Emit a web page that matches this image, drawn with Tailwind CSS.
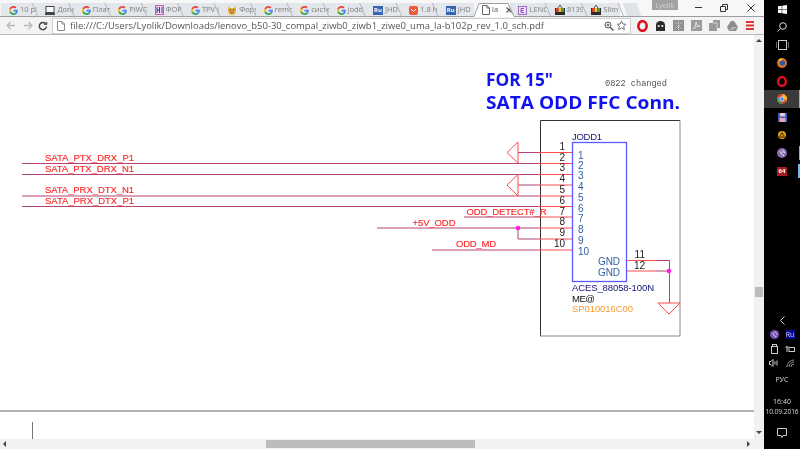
<!DOCTYPE html>
<html lang="en">
<head>
  <meta charset="UTF-8" />
  <title>la-b102p_rev_1.0_sch.pdf</title>
  <script src="https://cdn.jsdelivr.net/npm/@tailwindcss/browser@4"></script>
</head>
<body class="bg-black">
  <svg class="hidden">
    <symbol id="g" viewBox="0 0 48 48">
      <path fill="#EA4335" d="M24 9.5c3.54 0 6.71 1.22 9.21 3.6l6.85-6.85C35.9 2.38 30.47 0 24 0 14.62 0 6.51 5.38 2.56 13.22l7.98 6.19C12.43 13.72 17.74 9.5 24 9.5z"/>
      <path fill="#4285F4" d="M46.98 24.55c0-1.57-.15-3.09-.38-4.55H24v9.02h12.94c-.58 2.96-2.26 5.48-4.78 7.18l7.73 6c4.51-4.18 7.09-10.36 7.09-17.65z"/>
      <path fill="#FBBC05" d="M10.53 28.59c-.48-1.45-.76-2.99-.76-4.59s.27-3.14.76-4.59l-7.98-6.19C.92 16.46 0 20.12 0 24c0 3.88.92 7.54 2.56 10.78l7.97-6.19z"/>
      <path fill="#34A853" d="M24 48c6.48 0 11.93-2.13 15.89-5.81l-7.73-6c-2.15 1.45-4.92 2.3-8.16 2.3-6.26 0-11.57-4.22-13.47-9.91l-7.98 6.19C6.51 42.62 14.62 48 24 48z"/>
    </symbol>
    <symbol id="tv" viewBox="0 0 10 10">
      <rect y="3" width="10" height="7" fill="#2b2b2b"/>
      <rect x="1" y="3" width="2.6" height="4" fill="#e53935"/>
      <rect x="3.6" y="3" width="2.6" height="4" fill="#fbc02d"/>
      <rect x="6.2" y="3" width="2.8" height="4" fill="#43a047"/>
      <path d="M3 3l2-3 2 3" fill="none" stroke="#555"/>
    </symbol>
  </svg>

  <div class="flex w-[800px] h-[449px] overflow-hidden font-['Open_Sans',sans-serif]">
    <!-- browser window -->
    <div class="flex flex-col w-[764px] bg-white">
      <!-- tab strip -->
      <div class="relative flex h-[17px] pt-[3px] pl-px bg-[#f7f7f7] text-[7.5px] leading-none text-[#7d7d7d] whitespace-nowrap blur-[0.3px]">
        <div class="flex items-center gap-[2px] w-[36.4px] pl-2 overflow-hidden bg-[#e3e6ea]"><svg class="w-[9px] h-[9px] shrink-0"><use href="#g"/></svg><span>10 pi</span></div>
        <div class="flex items-center gap-[2px] w-[36.4px] pl-2 overflow-hidden bg-[#e3e6ea]">
          <svg class="w-[10px] h-[9px] shrink-0" viewBox="0 0 10 9"><rect x="1" y="0.5" width="8" height="6" fill="#fff" stroke="#444"/><rect y="7" width="10" height="2" fill="#444"/></svg><span>Допс</span>
        </div>
        <div class="flex items-center gap-[2px] w-[36.4px] pl-2 overflow-hidden bg-[#e3e6ea]"><svg class="w-[9px] h-[9px] shrink-0"><use href="#g"/></svg><span>Плат</span></div>
        <div class="flex items-center gap-[2px] w-[36.4px] pl-2 overflow-hidden bg-[#e3e6ea]"><svg class="w-[9px] h-[9px] shrink-0"><use href="#g"/></svg><span>PIWG</span></div>
        <div class="flex items-center gap-[2px] w-[36.4px] pl-2 overflow-hidden bg-[#e3e6ea]">
          <svg class="w-[9px] h-[10px] shrink-0" viewBox="0 0 9 10"><rect x="0.5" y="0.5" width="8" height="9" fill="#f4d6ec" stroke="#d05ab0"/><path d="M2 2v6M4.500 2v6M7 2v6M2 5h2.500" stroke="#2f3fb0" fill="none"/></svg><span>ФОР</span>
        </div>
        <div class="flex items-center gap-[2px] w-[36.4px] pl-2 overflow-hidden bg-[#e3e6ea]"><svg class="w-[9px] h-[9px] shrink-0"><use href="#g"/></svg><span>TPV C</span></div>
        <div class="flex items-center gap-[2px] w-[36.4px] pl-2 overflow-hidden bg-[#e3e6ea]">
          <svg class="w-[10px] h-[9px] shrink-0" viewBox="0 0 10 9"><path d="M1 0l2 2h4l2-2v6l-2 3H3L1 6z" fill="#e3b23c"/><circle cx="3.500" cy="4" r="0.800" fill="#333"/><circle cx="6.500" cy="4" r="0.800" fill="#333"/><path d="M3.500 6.500h3" stroke="#a33" fill="none"/></svg><span>Фору</span>
        </div>
        <div class="flex items-center gap-[2px] w-[36.4px] pl-2 overflow-hidden bg-[#e3e6ea]"><svg class="w-[9px] h-[9px] shrink-0"><use href="#g"/></svg><span>remo</span></div>
        <div class="flex items-center gap-[2px] w-[36.4px] pl-2 overflow-hidden bg-[#e3e6ea]"><svg class="w-[9px] h-[9px] shrink-0"><use href="#g"/></svg><span>систе</span></div>
        <div class="flex items-center gap-[2px] w-[36.4px] pl-2 overflow-hidden bg-[#e3e6ea]"><svg class="w-[9px] h-[9px] shrink-0"><use href="#g"/></svg><span>jodd</span></div>
        <div class="flex items-center gap-[2px] w-[36.4px] pl-2 overflow-hidden bg-[#e3e6ea]">
          <span class="flex items-center justify-center w-[10px] h-[9px] shrink-0 bg-[#3565b0] text-white text-[6px] font-bold">Ru</span><span>JHD</span>
        </div>
        <div class="flex items-center gap-[2px] w-[36.4px] pl-2 overflow-hidden bg-[#e3e6ea]">
          <svg class="w-[9px] h-[9px] shrink-0" viewBox="0 0 9 9"><rect width="9" height="9" rx="2" fill="#ef5a3c"/><path d="M2 3l2.500 2.500L7 3" stroke="#fff" fill="none"/></svg><span>1.8 h</span>
        </div>
        <div class="flex items-center gap-[2px] w-[36.4px] pl-2 overflow-hidden bg-[#e3e6ea]">
          <span class="flex items-center justify-center w-[10px] h-[9px] shrink-0 bg-[#3565b0] text-white text-[6px] font-bold">Ru</span><span>JHD</span>
        </div>
        <div class="flex items-center gap-[2px] w-[40px] -mr-[3.6px] pl-2 overflow-hidden bg-white text-[#555] [clip-path:polygon(0_100%,5px_0,calc(100%-6px)_0,100%_100%)] z-10">
          <svg class="w-[8px] h-[10px] shrink-0" viewBox="0 0 8 10"><path d="M.5.5h4.500l2.500 2.500v6.500h-7zM5 .5v2.500h2.500" fill="#fff" stroke="#666"/></svg><span>la</span>
          <svg class="w-[6px] h-[6px] ml-[6px] shrink-0" viewBox="0 0 6 6"><path d="M.5.5l5 5M5.500.5l-5 5" stroke="#555" stroke-width="1.100"/></svg>
        </div>
        <div class="flex items-center gap-[2px] w-[36.4px] pl-2 overflow-hidden bg-[#e3e6ea]">
          <svg class="w-[9px] h-[9px] shrink-0" viewBox="0 0 9 9"><rect x="0.500" y="0.500" width="8" height="8" fill="#efe4f7" stroke="#9a6cc4"/><path d="M6 2.500H3v4h3M3 4.500h2.500" stroke="#8a55bb" fill="none"/></svg><span>LENC</span>
        </div>
        <div class="flex items-center gap-[2px] w-[36.4px] pl-2 overflow-hidden bg-[#e3e6ea]"><svg class="w-[10px] h-[10px] shrink-0"><use href="#tv"/></svg><span>8139</span></div>
        <div class="flex items-center gap-[2px] w-[36.4px] pl-2 overflow-hidden bg-[#e3e6ea]"><svg class="w-[10px] h-[10px] shrink-0"><use href="#tv"/></svg><span>Slim</span></div>
        <div class="w-[19px] ml-[3px] bg-[#dfe3e8] [clip-path:polygon(0_0,calc(100%-5px)_0,100%_100%,5px_100%)]"></div>

        <!-- tab separators and the active tab's outline -->
        <svg class="absolute inset-0 w-[764px] h-[17px] z-20 pointer-events-none" viewBox="0 0 764 17" fill="none">
          <path stroke="#b5b8bc" d="M32 3l6 14M68.400 3l6 14M104.800 3l6 14M141.200 3l6 14M177.600 3l6 14M214 3l6 14M250.400 3l6 14M286.800 3l6 14M323.200 3l6 14M359.600 3l6 14M396 3l6 14M432.400 3l6 14M545 3l6 14M581.500 3l6 14M618 3l6 14"/>
          <path stroke="#9a9da1" d="M0 16.500H474L479 3.500H508L514 16.500H764"/>
        </svg>

        <!-- signed-in user badge, sits in the frame -->
        <div class="absolute left-[652px] top-0 flex items-center justify-center w-[26px] h-[10px] bg-[#a2a2a2] text-[7px] text-[#d5d5d5]">Lyolik</div>
        <div class="absolute left-[685px] top-0 flex w-[79px] h-[17px]">
          <div class="flex items-center justify-center w-[26px] h-[15px]"><span class="w-[7px] h-px bg-[#333]"></span></div>
          <div class="flex items-center justify-center w-[26px] h-[15px]">
            <svg class="w-[8px] h-[8px]" viewBox="0 0 8 8" fill="none" stroke="#333"><path d="M.5 2.500h5v5h-5zM2.500 2.500v-2h5v5h-2"/></svg>
          </div>
          <div class="flex items-center justify-center w-[27px] h-[15px]">
            <svg class="w-[8px] h-[8px]" viewBox="0 0 8 8" fill="none" stroke="#333"><path d="M.5.5l7 7M7.500.5l-7 7"/></svg>
          </div>
        </div>
      </div>

      <!-- toolbar -->
      <div class="flex items-center h-[18px] bg-[#f3f3f3] border-b border-[#b8b8b8] blur-[0.3px]">
        <div class="flex items-center w-[52px] h-full pl-[6px] gap-[9px]">
          <svg class="w-[9px] h-[9px] shrink-0" viewBox="0 0 9 9" fill="none" stroke="#b9b9b9" stroke-width="1.300"><path d="M9 4.500H1M4.500 1L1 4.500 4.500 8"/></svg>
          <svg class="w-[9px] h-[9px] shrink-0" viewBox="0 0 9 9" fill="none" stroke="#b9b9b9" stroke-width="1.300"><path d="M0 4.500h8M4.500 1L8 4.500 4.500 8"/></svg>
          <svg class="w-[10px] h-[10px] -ml-[4px] shrink-0" viewBox="0 0 10 10" fill="none" stroke="#444" stroke-width="1.500"><path d="M8.500 5.500a3.600 3.600 0 1 1-1-3"/><path d="M8.800.8v2.700H6.100" fill="#444" stroke-width="0.800"/></svg>
        </div>
        <div class="flex items-center w-[579px] h-[16px] bg-white border border-[#cfcfcf] pl-[4px]">
          <svg class="w-[8px] h-[10px] shrink-0" viewBox="0 0 8 10"><path d="M.5.500h4.500l2.500 2.500v6.500h-7zM5 .5v2.500h2.500" fill="#fff" stroke="#8a8a8a"/></svg>
          <span class="ml-[5px] w-[447px] text-[9.45px] leading-none text-[#555] whitespace-nowrap">file:///C:/Users/Lyolik/Downloads/lenovo_b50-30_compal_ziwb0_ziwb1_ziwe0_uma_la-b102p_rev_1.0_sch.pdf</span>
          <svg class="w-[10px] h-[10px] ml-auto shrink-0" viewBox="0 0 10 10" fill="none" stroke="#555"><circle cx="4" cy="4" r="3"/><path d="M6.500 6.500L9.500 9.500" stroke-width="1.500"/><path d="M2.500 4h3M4 2.500v3"/></svg>
          <svg class="w-[11px] h-[11px] ml-[2px] mr-[3px] shrink-0" viewBox="0 0 11 11" fill="none" stroke="#777"><path d="M5.500 1l1.400 3 3.100.3-2.400 2.100.8 3.200-2.900-1.700-2.900 1.700.8-3.200L1 4.300l3.100-.3z"/></svg>
        </div>
        <div class="flex items-center justify-between w-[129px] h-full pl-[6px] pr-[5px]">
          <svg class="w-[11px] h-[12px]" viewBox="0 0 10 11"><ellipse cx="5" cy="5.500" rx="3.800" ry="4.400" fill="none" stroke="#e0101e" stroke-width="2.400"/></svg>
          <svg class="w-[11px] h-[10px]" viewBox="0 0 11 10"><path d="M1 4a4.500 4 0 0 1 9 0v6H1z" fill="#2a2a2a"/><circle cx="3.700" cy="5" r="1" fill="#fff"/><circle cx="7.300" cy="5" r="1" fill="#fff"/></svg>
          <svg class="w-[11px] h-[11px]" viewBox="0 0 11 11"><rect width="11" height="11" fill="#8e8e8e"/><path d="M2 2l7 7M9 2l-7 7M5.500 1v9" stroke="#e6e6e6" stroke-dasharray="1 1"/></svg>
          <svg class="w-[11px] h-[11px]" viewBox="0 0 11 11"><rect width="11" height="11" fill="#9c9c9c"/><path d="M2 9c2-1 3-4 3-7 0 3 2 4 4 4-2 0-5 1-7 3z" fill="none" stroke="#e3e3e3"/></svg>
          <svg class="w-[11px] h-[11px]" viewBox="0 0 11 11"><path d="M4 0h7v8H8v3H0V3h4z" fill="#9a9a9a"/><path d="M4 3h4v5" stroke="#cfcfcf" fill="none"/></svg>
          <svg class="w-[11px] h-[10px]" viewBox="0 0 11 10"><path d="M4 0h3l4 6-2 4H2L0 6z" fill="#8c8c8c"/><path d="M2 10l3-4h6" fill="#b8b8b8"/></svg>
          <svg class="w-[10px] h-[9px]" viewBox="0 0 10 9"><path d="M1 1h8M1 4.500h8M1 8h8" stroke="#e53030" stroke-width="1.800"/></svg>
        </div>
      </div>

      <!-- page area -->
      <div class="flex flex-1 min-h-0">
        <svg class="w-[754px] h-[404px] blur-[0.25px]" viewBox="0 35 754 404" fill="none" font-family="'Liberation Sans',sans-serif">
          <!-- connector frame -->
          <path d="M540.500 336V120.500H680" stroke="#333"/>
          <path d="M680 120.500V336H540" stroke="#888"/>
          <rect x="572.500" y="142.500" width="54" height="139" stroke="#5a5aff" stroke-width="1.300"/>

          <!-- net wires -->
          <g stroke="#b5456f">
            <path d="M22 163.500H540M22 174.500H540M22 196H540M22 206.500H540M464 217H540M377 228H540M432 250H540"/>
            <path d="M518 152.500H540M518 185H540M518 228V239H540"/>
            <path d="M655 260.500H669.500V303M655 271H669"/>
          </g>
          <g stroke="#ff4a4a">
            <path d="M540 152.500H572M540 163.500H572M540 174.500H572M540 185H572M540 196H572M540 206.500H572M540 217H572M540 228H572M540 239H572M540 250H572"/>
            <path d="M627 260.500H655M627 271H655"/>
            <path d="M518 142L507 152.500 518 163V142M518 174.500L507 185 518 196V174.500M658 303H680L669 314z"/>
          </g>
          <circle cx="518" cy="228" r="2.300" fill="#ff1ee0"/>
          <circle cx="669" cy="271" r="2.300" fill="#ff1ee0"/>

          <!-- net names -->
          <g fill="#ff2a2a" stroke="#ff2a2a" stroke-width="0.150" font-size="9.500">
            <text x="45" y="161" textLength="89">SATA_PTX_DRX_P1</text>
            <text x="45" y="172" textLength="89">SATA_PTX_DRX_N1</text>
            <text x="45" y="193" textLength="89">SATA_PRX_DTX_N1</text>
            <text x="45" y="204" textLength="89">SATA_PRX_DTX_P1</text>
            <text x="466.500" y="215" textLength="80">ODD_DETECT#_R</text>
            <text x="412.500" y="226" textLength="43">+5V_ODD</text>
            <text x="456" y="247" textLength="40">ODD_MD</text>
          </g>

          <!-- titles -->
          <g fill="#1212f0" font-family="'Open Sans',sans-serif" font-weight="700" font-size="18" lengthAdjust="spacingAndGlyphs">
            <text x="486" y="86" textLength="67" lengthAdjust="spacingAndGlyphs">FOR 15"</text>
            <text x="486" y="109" textLength="194" lengthAdjust="spacingAndGlyphs">SATA ODD FFC Conn.</text>
          </g>
          <text x="605" y="86" fill="#555" font-size="8.700" font-family="'Liberation Mono',monospace" textLength="62">0822 changed</text>

          <!-- pin numbers outside the part -->
          <g fill="#222" font-size="10" text-anchor="end">
            <text x="565" y="150">1</text><text x="565" y="161">2</text><text x="565" y="171">3</text><text x="565" y="182">4</text><text x="565" y="193">5</text>
            <text x="565" y="204">6</text><text x="565" y="215">7</text><text x="565" y="225">8</text><text x="565" y="236">9</text><text x="565" y="247">10</text>
            <text x="645" y="258">11</text><text x="645" y="269">12</text>
          </g>

          <!-- pin names inside the part -->
          <g fill="#2f5f9f" font-size="10">
            <text x="578" y="159">1</text><text x="578" y="169">2</text><text x="578" y="179">3</text><text x="578" y="190">4</text><text x="578" y="200.500">5</text>
            <text x="578" y="211.500">6</text><text x="578" y="222">7</text><text x="578" y="233">8</text><text x="578" y="244">9</text><text x="578" y="254.500">10</text>
            <text x="598" y="265" textLength="22">GND</text><text x="598" y="276" textLength="22">GND</text>
          </g>

          <!-- part attributes -->
          <g font-size="9.500">
            <text x="572" y="140" fill="#14147a" textLength="30">JODD1</text>
            <text x="572" y="291" fill="#14147a" textLength="82">ACES_88058-100N</text>
            <text x="572" y="302" fill="#111" textLength="23">ME@</text>
            <text x="572" y="312" fill="#ff9a2a" textLength="61">SP010016C00</text>
          </g>

          <!-- next page edge and text cursor -->
          <path d="M0 411H754" stroke="#666"/>
          <path d="M32.500 422V439" stroke="#777"/>
        </svg>

        <!-- vertical scrollbar -->
        <div class="flex flex-col items-center w-[10px] h-[404px] bg-[#f1f1f1]">
          <span class="mt-[4px] w-0 h-0 border-x-[3px] border-x-transparent border-b-[3px] border-b-[#444]"></span>
          <span class="mt-[245px] w-[8px] h-[10px] bg-[#bcbcbc]"></span>
          <span class="mt-[134px] w-0 h-0 border-x-[3px] border-x-transparent border-t-[3px] border-t-[#444]"></span>
        </div>
      </div>

      <!-- horizontal scrollbar -->
      <div class="flex items-center w-[764px] h-[10px] bg-[#f1f1f1]">
        <span class="ml-[3px] w-0 h-0 border-y-[3px] border-y-transparent border-r-[3px] border-r-[#444]"></span>
        <span class="ml-[260px] w-[209px] h-[8px] bg-[#bcbcbc]"></span>
        <span class="ml-[272px] w-0 h-0 border-y-[3px] border-y-transparent border-l-[3px] border-l-[#444]"></span>
      </div>
    </div>

    <!-- windows taskbar -->
    <div class="flex flex-col items-center w-[36px] bg-black text-[#d8d8d8] font-['Open_Sans',sans-serif] blur-[0.3px]">
      <div class="flex flex-col items-center w-full">
        <div class="flex items-center justify-center h-[18px] w-full">
          <svg class="w-[9px] h-[9px]" viewBox="0 0 9 9" fill="#fff"><path d="M0 1.300l3.700-.5v3.400H0zM4.200.7L9 0v4.200H4.200zM0 4.700h3.700v3.500L0 7.700zM4.200 4.700H9V9l-4.800-.7z"/></svg>
        </div>
        <div class="flex items-center justify-center h-[18px] w-full">
          <svg class="w-[10px] h-[10px]" viewBox="0 0 10 10" fill="none" stroke="#ddd"><circle cx="6" cy="4" r="3.300"/><path d="M3.500 6.500L.5 9.500"/></svg>
        </div>
        <div class="flex items-center justify-center h-[18px] w-full">
          <svg class="w-[13px] h-[10px]" viewBox="0 0 13 10" fill="none" stroke="#ccc"><rect x="2.500" y="0.500" width="8" height="9"/><path d="M0 2v6M13 2v6"/></svg>
        </div>
        <div class="flex items-center justify-center h-[18px] w-full">
          <svg class="w-[10px] h-[10px]" viewBox="0 0 10 10"><circle cx="5" cy="5" r="5" fill="#e8711c"/><circle cx="5.500" cy="5" r="2.700" fill="#2a5cab"/><path d="M1 3c1-2 3-3 5-2.500L4 3z" fill="#f7b32b"/></svg>
        </div>
        <div class="flex items-center justify-center h-[18px] w-full">
          <svg class="w-[10px] h-[11px]" viewBox="0 0 10 11"><ellipse cx="5" cy="5.500" rx="3.800" ry="4.400" fill="none" stroke="#e0101e" stroke-width="2.400"/></svg>
        </div>
        <div class="relative flex items-center justify-center h-[18px] w-full bg-[#3a3a3a]">
          <svg class="w-[10px] h-[10px]" viewBox="0 0 10 10"><circle cx="5" cy="5" r="5" fill="#dd4b39"/><path d="M5 10A5 5 0 0 1 .6 2.600L3 6.500z" fill="#34a853"/><path d="M5 0a5 5 0 0 1 4.600 7L6 3z" fill="#fbbc05"/><circle cx="5" cy="5" r="2.200" fill="#4285f4" stroke="#fff" stroke-width="0.700"/></svg>
          <span class="absolute right-0 top-0 w-px h-full bg-[#7fb5e0]"></span>
        </div>
        <div class="relative flex items-center justify-center h-[18px] w-full">
          <svg class="w-[9px] h-[9px]" viewBox="0 0 9 9"><rect width="9" height="9" fill="#3c5fc0"/><rect x="2" width="5" height="3.500" fill="#e8c8d8"/><rect x="1.500" y="5" width="6" height="4" fill="#f0a0b0"/></svg>
        </div>
        <div class="flex items-center justify-center h-[18px] w-full">
          <svg class="w-[8px] h-[8px]" viewBox="0 0 8 8"><circle cx="4" cy="4" r="4" fill="#e0a010"/><path d="M4 1.500L6.500 6h-5z" fill="none" stroke="#3a2a00"/></svg>
        </div>
        <div class="relative flex items-center justify-center h-[18px] w-full">
          <svg class="w-[10px] h-[10px]" viewBox="0 0 10 10"><circle cx="5" cy="5" r="5" fill="#8a6ab0"/><path d="M3 3c1 3 2 4 4 4.500M5 2.500c1.500 0 2.500 1 2.500 2.500M5 4c.6 0 1 .4 1 1" fill="none" stroke="#eee"/></svg>
          <span class="absolute right-0 top-[2px] w-px h-[14px] bg-[#7fb5e0]"></span>
        </div>
        <div class="relative flex items-center justify-center h-[18px] w-full">
          <span class="flex items-center justify-center w-[10px] h-[9px] bg-[#a81c24] text-[6px] leading-none font-bold text-white">64</span>
          <span class="absolute right-0 top-[2px] w-[2px] h-[14px] bg-[#7fb5e0]"></span>
        </div>
      </div>

      <!-- tray -->
      <div class="flex flex-col items-center w-full mt-[136px]">
        <svg class="w-[5px] h-[9px]" viewBox="0 0 5 9" fill="none" stroke="#ccc"><path d="M4.500.5L.5 4.500l4 4"/></svg>
        <div class="grid grid-cols-2 justify-items-center items-center w-[32px] mt-[5px] gap-y-[5px]">
          <svg class="w-[9px] h-[9px]" viewBox="0 0 10 10"><circle cx="5" cy="5" r="5" fill="#7a52b8"/><path d="M3 3c1 3 2 4 4 4.500M5 2.500c1.500 0 2.500 1 2.500 2.500" fill="none" stroke="#eee"/></svg>
          <span class="flex items-center justify-center w-[9px] h-[9px] bg-[#0a0a90] text-[7px] leading-none text-[#cfd6ff]">Ru</span>
          <svg class="w-[7px] h-[10px]" viewBox="0 0 7 10" fill="none" stroke="#ccc"><rect x="1.500" y="0.500" width="4" height="2"/><rect x="0.500" y="2.500" width="6" height="7"/></svg>
          <svg class="w-[10px] h-[8px]" viewBox="0 0 10 8" fill="none" stroke="#ccc"><rect x="4" y="2.500" width="5.500" height="4"/><path d="M2 1v6M0.500 2h3"/></svg>
          <svg class="w-[10px] h-[8px]" viewBox="0 0 10 8" fill="none" stroke="#ccc"><path d="M.5 2.500h1.500L4 .5v7L2 5.500H.5zM6 2.500v3M8 1.500v5"/></svg>
          <svg class="w-[9px] h-[8px]" viewBox="0 0 9 8" fill="none" stroke="#aaa" stroke-width="0.800"><path d="M1 8a7 7 0 0 1 7-7M3 8a5 5 0 0 1 5-5M5 8a3 3 0 0 1 3-3"/></svg>
        </div>
        <span class="mt-[8px] text-[7px] leading-[9px]">РУС</span>
        <span class="mt-[13px] text-[7px] leading-[9px]">16:40</span>
        <span class="mt-[1px] text-[6.5px] leading-[9px] whitespace-nowrap">10.09.2016</span>
        <svg class="mt-[12px] w-[10px] h-[10px]" viewBox="0 0 10 10" fill="none" stroke="#ccc"><path d="M.5.5h9v7H6L5 9.500 4 7.500H.5z"/></svg>
      </div>
    </div>
  </div>
</body>
</html>
